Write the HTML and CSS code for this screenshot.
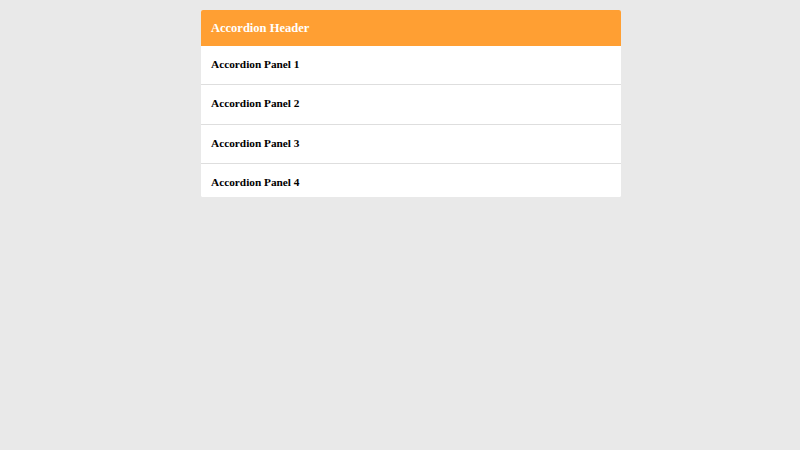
FILE: index.html
```html
<!DOCTYPE html>
<html>
<head>
<meta charset="utf-8">
<link rel="stylesheet" href="styles.css">
</head>
<body>
<div class="accordion">
  <div class="acc-header">Accordion Header</div>
  <div class="acc-panel">Accordion Panel 1</div>
  <div class="acc-panel">Accordion Panel 2</div>
  <div class="acc-panel">Accordion Panel 3</div>
  <div class="acc-panel">Accordion Panel 4</div>
</div>
</body>
</html>
```

FILE: styles.css
```css
html, body {
  margin: 0;
  padding: 0;
  background: #e9e9e9;
}
body {
  font-family: "Liberation Serif", "Times New Roman", serif;
  padding-top: 10px;
}
.accordion {
  width: 420px;
  margin-left: 201px;
  height: 187px;
  overflow: hidden;
  border-radius: 2px;
  background: #ffffff;
}
.acc-header {
  background: #ff9f33;
  color: #ffffff;
  font-weight: bold;
  font-size: 12.5px;
  height: 36px;
  line-height: 37px;
  padding: 0 10px;
}
.acc-panel {
  background: #ffffff;
  color: #000000;
  font-weight: bold;
  font-size: 11.3px;
  height: 38.3px;
  line-height: 37px;
  padding: 0 10px;
  border-bottom: 1px solid #dedede;
}
```
